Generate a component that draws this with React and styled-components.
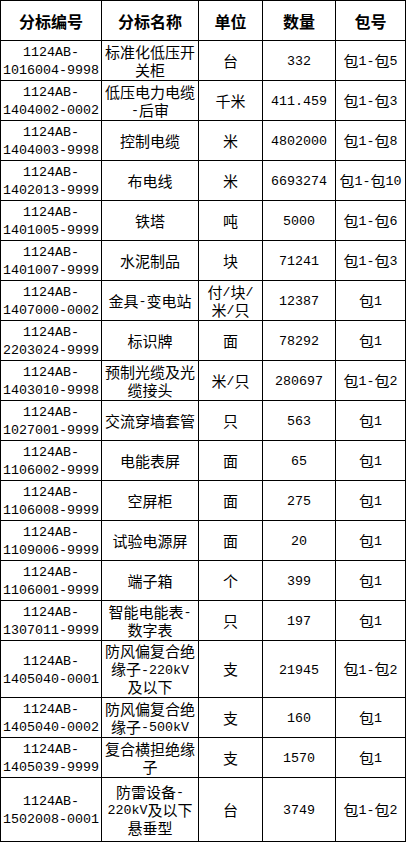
import styled, { createGlobalStyle } from 'styled-components'

const GlobalStyle = createGlobalStyle`
  html, body {
    margin: 0;
    padding: 0;
    background: #fff;
  }
`

const COLUMNS = '100px 96px 63px 72px 69px'
const HAN = /([\u2E80-\u9FFF\uFF00-\uFFEF]+)/

const headers = ['分标编号', '分标名称', '单位', '数量', '包号']

const rows = [
  { code: '1016004-9998', name: ['标准化低压开', '关柜'], unit: ['台'], qty: '332', pkg: '包1-包5' },
  { code: '1404002-0002', name: ['低压电力电缆', '-后审'], unit: ['千米'], qty: '411.459', pkg: '包1-包3' },
  { code: '1404003-9998', name: ['控制电缆'], unit: ['米'], qty: '4802000', pkg: '包1-包8' },
  { code: '1402013-9999', name: ['布电线'], unit: ['米'], qty: '6693274', pkg: '包1-包10' },
  { code: '1401005-9999', name: ['铁塔'], unit: ['吨'], qty: '5000', pkg: '包1-包6' },
  { code: '1401007-9999', name: ['水泥制品'], unit: ['块'], qty: '71241', pkg: '包1-包3' },
  { code: '1407000-0002', name: ['金具-变电站'], unit: ['付/块/', '米/只'], qty: '12387', pkg: '包1' },
  { code: '2203024-9999', name: ['标识牌'], unit: ['面'], qty: '78292', pkg: '包1' },
  { code: '1403010-9998', name: ['预制光缆及光', '缆接头'], unit: ['米/只'], qty: '280697', pkg: '包1-包2' },
  { code: '1027001-9999', name: ['交流穿墙套管'], unit: ['只'], qty: '563', pkg: '包1' },
  { code: '1106002-9999', name: ['电能表屏'], unit: ['面'], qty: '65', pkg: '包1' },
  { code: '1106008-9999', name: ['空屏柜'], unit: ['面'], qty: '275', pkg: '包1' },
  { code: '1109006-9999', name: ['试验电源屏'], unit: ['面'], qty: '20', pkg: '包1' },
  { code: '1106001-9999', name: ['端子箱'], unit: ['个'], qty: '399', pkg: '包1' },
  { code: '1307011-9999', name: ['智能电能表-', '数字表'], unit: ['只'], qty: '197', pkg: '包1' },
  { code: '1405040-0001', name: ['防风偏复合绝', '缘子-220kV', '及以下'], unit: ['支'], qty: '21945', pkg: '包1-包2', h: 56 },
  { code: '1405040-0002', name: ['防风偏复合绝', '缘子-500kV'], unit: ['支'], qty: '160', pkg: '包1' },
  { code: '1405039-9999', name: ['复合横担绝缘', '子'], unit: ['支'], qty: '1570', pkg: '包1' },
  { code: '1502008-0001', name: ['防雷设备-', '220kV及以下', '悬垂型'], unit: ['台'], qty: '3749', pkg: '包1-包2', h: 63 },
]

// SimSun-like mix: half-width latin in mono, han in the CJK face
function Mixed({ text }) {
  return text.split(HAN).map((part, i) => {
    if (!part) return null
    return i % 2 ? <Han key={i}>{part}</Han> : <Latin key={i}>{part}</Latin>
  })
}

function Lines({ lines }) {
  return lines.map((line, i) => (
    <Line key={i}><Mixed text={line} /></Line>
  ))
}

function App() {
  return (
    <>
      <GlobalStyle />
      <Table>
        <Row $h={39}>
          {headers.map(it => <HeaderCell key={it}>{it}</HeaderCell>)}
        </Row>

        {rows.map(it => (
          <Row key={it.code} $h={it.h || 39}>
            <Cell><Lines lines={['1124AB-', it.code]} /></Cell>
            <Cell><Lines lines={it.name} /></Cell>
            <Cell><Lines lines={it.unit} /></Cell>
            <Cell><Lines lines={[it.qty]} /></Cell>
            <Cell><Lines lines={[it.pkg]} /></Cell>
          </Row>
        ))}
      </Table>
    </>
  )
}

export default App;

const Table = styled.div`
  display: flex;
  flex-direction: column;
  gap: 1px;
  width: fit-content;
  background: #000;
  border: 1px solid #000;
`

const Row = styled.div`
  display: grid;
  grid-template-columns: ${COLUMNS};
  gap: 1px;
  height: ${p => p.$h}px;
`

const Cell = styled.div`
  display: flex;
  flex-direction: column;
  align-items: center;
  justify-content: center;
  background: #fff;
  color: #000;
  overflow: hidden;
`

const HeaderCell = styled(Cell)`
  font-family: "Noto Sans CJK SC", sans-serif;
  font-size: 16px;
  font-weight: bold;
`

const Line = styled.div`
  display: flex;
  align-items: center;
  height: 18px;
  white-space: nowrap;
`

const Latin = styled.span`
  font-family: "Liberation Mono", monospace;
  font-size: 13.33px;
  line-height: 18px;
  padding-top: 3px;
`

const Han = styled.span`
  font-family: "Noto Sans CJK SC", sans-serif;
  font-size: 15px;
  line-height: 18px;
`
